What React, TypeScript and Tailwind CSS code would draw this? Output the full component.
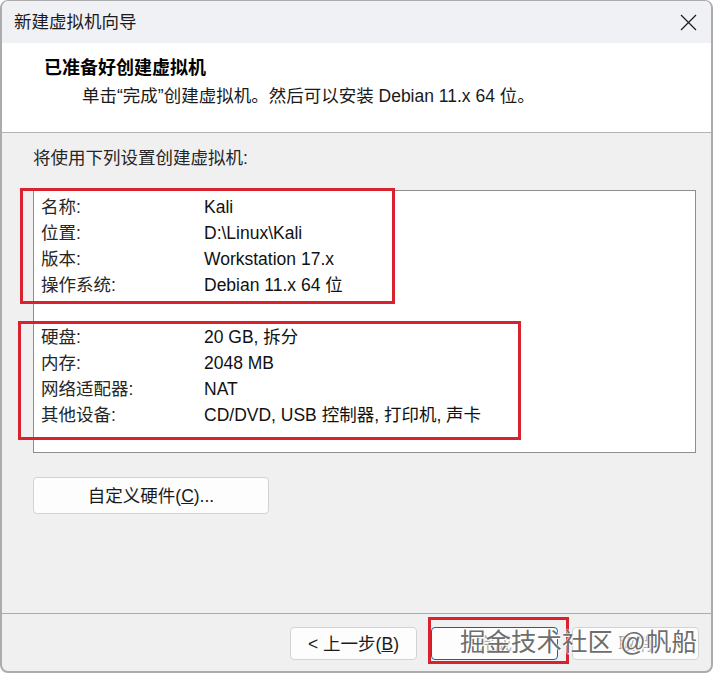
import React from "react";

const font = { fontFamily: '"Liberation Sans", "Noto Sans CJK SC", sans-serif' };

const groupA: [string, string][] = [
  ["名称:", "Kali"],
  ["位置:", "D:\\Linux\\Kali"],
  ["版本:", "Workstation 17.x"],
  ["操作系统:", "Debian 11.x 64 位"],
];

const groupB: [string, string][] = [
  ["硬盘:", "20 GB, 拆分"],
  ["内存:", "2048 MB"],
  ["网络适配器:", "NAT"],
  ["其他设备:", "CD/DVD, USB 控制器, 打印机, 声卡"],
];

function Row({ label, value }: { label: string; value: string }) {
  return (
    <div className="flex h-[26px] items-center">
      <span className="w-[163px] text-[#262626]">{label}</span>
      <span className="text-[#111]">{value}</span>
    </div>
  );
}

export default function App() {
  return (
    <div className="w-[714px] h-[674px] bg-white" style={font}>
      <div className="relative flex flex-col w-[713px] h-[673px] border-2 border-t border-[#acacac] rounded-lg overflow-hidden bg-[#f0f0f0] text-[17.5px] leading-6">
        {/* title bar */}
        <div className="flex h-[42px] shrink-0 items-center justify-between bg-[#eff1f5] pl-3 pr-[14px]">
          <span className="text-[#1b1b1b]">新建虚拟机向导</span>
          <svg width="17" height="17" viewBox="0 0 17 17" fill="none">
            <path d="M1 1L16 16M16 1L1 16" stroke="#1b1b1b" strokeWidth="1.2" />
          </svg>
        </div>

        {/* header */}
        <div className="h-[90px] shrink-0 bg-white pl-[42px] pt-[13px] border-b border-[#b4b4b4]">
          <div className="font-bold text-[18px] text-black">已准备好创建虚拟机</div>
          <div className="mt-1 pl-[38px] text-[#1a1a1a]">
            单击“完成”创建虚拟机。然后可以安装 Debian 11.x 64 位。
          </div>
        </div>

        {/* content */}
        <div className="flex-1 px-[31px] pt-[13px]">
          <div className="text-[#262626]">将使用下列设置创建虚拟机:</div>
          <div className="mt-[20px] h-[263px] w-[663px] border border-[#8e8e8e] bg-white pl-[7px] pt-[3px]">
            {groupA.map(([l, v]) => (
              <Row key={l} label={l} value={v} />
            ))}
            <div className="h-[26px]" />
            {groupB.map(([l, v]) => (
              <Row key={l} label={l} value={v} />
            ))}
          </div>
          <button className="mt-[24px] flex h-[37px] w-[236px] items-center justify-center rounded-[4px] border border-[#d3d3d3] bg-[#fdfdfd] text-[#1a1a1a]">
            自定义硬件(<span className="underline">C</span>)...
          </button>
        </div>

        {/* footer */}
        <div className="flex h-[58px] shrink-0 items-start justify-end gap-[14px] border-t border-[#acacac] pr-[12px] pt-[13px]">
          <button className="flex h-[33px] w-[127px] items-center justify-center rounded-[4px] border border-[#d3d3d3] bg-[#fdfdfd] text-[#1a1a1a]">
            &lt; 上一步(<span className="underline">B</span>)
          </button>
          <button className="flex h-[33px] w-[127px] items-center justify-center rounded-[4px] border border-[#0067c0] bg-[#fdfdfd] text-[#1a1a1a]/40">
            完成
          </button>
          <button className="flex h-[33px] w-[127px] items-center justify-center rounded-[4px] border border-[#d3d3d3] bg-[#fdfdfd] text-[#1a1a1a]/40">
            取消
          </button>
        </div>

        {/* annotation boxes */}
        <div className="pointer-events-none absolute left-[18px] top-[187px] h-[116px] w-[375px] border-[3px] border-[#d8232f]" />
        <div className="pointer-events-none absolute left-[16px] top-[320px] h-[119px] w-[503px] border-[3px] border-[#d8232f]" />
        <div className="pointer-events-none absolute left-[426px] top-[616px] h-[47px] w-[141px] border-[3px] border-[#d8232f]" />

        {/* watermark */}
        <div
          className="pointer-events-none absolute left-[458px] top-[625px] text-[25.5px] leading-8 text-[#5a5a5a]/90 whitespace-nowrap"
          style={{ textShadow: "0 0 2px #fff, 0 0 2px #fff, 1px 1px 0 #fff" }}
        >
          掘金技术社区 @帆船
        </div>
      </div>
    </div>
  );
}
